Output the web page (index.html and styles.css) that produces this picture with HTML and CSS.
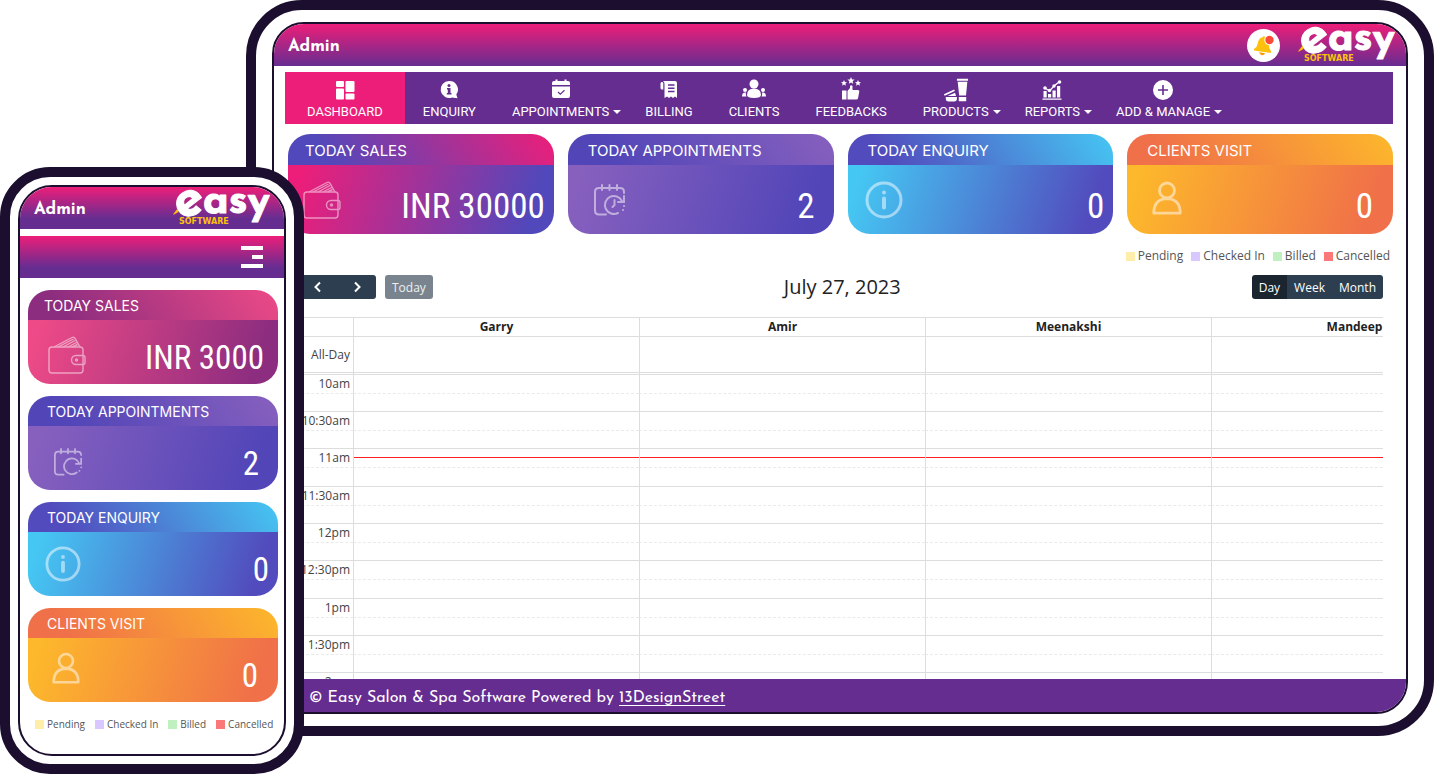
FILE: index.html
```html
<!DOCTYPE html>
<html lang="en">
<head>
<meta charset="utf-8">
<title>Easy Salon &amp; Spa Software</title>
<link rel="stylesheet" href="styles.css">
</head>
<body>
<svg class="sprite" aria-hidden="true">
  <symbol id="i-wallet" viewBox="0 0 38 38">
    <g fill="none" stroke="currentColor" stroke-width="1.400">
      <rect x="1" y="11" width="34" height="26" rx="3"/>
      <path d="M6 11L24 1.500q2-1 3 .8L32 11M10 11L25.500 3M15 11l12-6.500M20 11l8.500-4.500M24.500 11l5-2.500"/>
      <path d="M35 19.500h-7a4.500 4.500 0 0 0 0 9h7q2 0 2-2v-5q0-2-2-2z"/>
      <circle cx="28.500" cy="24" r="1"/>
    </g>
  </symbol>
  <symbol id="i-calclock" viewBox="0 0 32 32">
    <g fill="none" stroke="currentColor" stroke-width="2" stroke-linecap="round">
      <path d="M12 30.500H5q-4 0-4-4V8q0-4 4-4h21q4 0 4 4v1M8 1v5M15.500 1v5M23 1v5"/>
      <path d="M24 29a9 9 0 1 1 4-12M30 12v6h-6M20.500 16v5l-2 2"/>
      <path d="M30 22h.1M29 26h.1"/>
    </g>
  </symbol>
  <symbol id="i-calredo" viewBox="0 0 32 32">
    <g fill="none" stroke="currentColor" stroke-width="2" stroke-linecap="round">
      <path d="M11 30.500H5q-4 0-4-4V8q0-4 4-4h22q4 0 4 4M8 1v5M16 1v5M24 1v5"/>
      <path d="M26 28a9 9 0 1 1 3-10M31 12v6h-6M31 22h.1M29 26h.1"/>
    </g>
  </symbol>
  <symbol id="i-info" viewBox="0 0 38 38">
    <circle cx="19" cy="19" r="17" fill="none" stroke="currentColor" stroke-width="3"/>
    <circle cx="19" cy="11.500" r="2" fill="currentColor"/>
    <path d="M19 17.500v9" stroke="currentColor" stroke-width="4" stroke-linecap="round"/>
  </symbol>
  <symbol id="i-person" viewBox="0 0 30 34">
    <g fill="none" stroke="currentColor" stroke-width="2.800" stroke-linejoin="round">
      <circle cx="15" cy="9.500" r="7.500"/>
      <path d="M1.800 32.200h26.400q0-14-13.200-14.500Q1.800 18.200 1.800 32.200z"/>
    </g>
  </symbol>
  <symbol id="n-dash" viewBox="0 0 26 26">
    <g fill="currentColor">
      <rect x="4" y="4" width="8" height="6" rx="1"/><rect x="4" y="11.500" width="8" height="11" rx="1"/>
      <rect x="13.500" y="4" width="9" height="11" rx="1"/><rect x="13.500" y="16.500" width="9" height="6" rx="1"/>
    </g>
  </symbol>
  <symbol id="n-enq" viewBox="0 0 26 26">
    <path d="M13 4a8.500 8.500 0 1 0 3 16.500l5.500.8-1.200-3.800A8.500 8.500 0 0 0 13 4z" fill="currentColor"/>
    <g fill="#662d91"><circle cx="13" cy="8.500" r="1.500"/><path d="M11 11h3.500v5H15.500v1.500h-4.700V16h1v-3.500H11z"/></g>
  </symbol>
  <symbol id="n-appt" viewBox="0 0 26 26">
    <path d="M4 8V6q0-2 2-2h1.500V2.500h2V4h7V2.500h2V4H20q2 0 2 2v2zM4 9.500h18V19q0 2-2 2H6q-2 0-2-2z" fill="currentColor"/>
    <path d="M10 15l2.300 2.200 4.200-4" fill="none" stroke="#662d91" stroke-width="1.200"/>
  </symbol>
  <symbol id="n-bill" viewBox="0 0 26 26">
    <path d="M7 4h12q2 0 2 2v15l-2-1.500-2 1.500-2-1.500-2 1.500-2-1.500L8.500 21V7Q8.500 5 7 4zM7.300 6v6.500H6q-1.500 0-1.500-1.500V6.500Q4.500 5 5.800 5 7 5 7.300 6z" fill="currentColor"/>
    <path d="M12 8h6.500M12 11.200h6.500M12 14.400h6.500" stroke="#662d91" stroke-width="1.500"/>
  </symbol>
  <symbol id="n-clients" viewBox="0 0 26 26">
    <g fill="currentColor">
      <circle cx="13" cy="7" r="4.500"/><path d="M6 18q0-6.500 7-6.500t7 6.500q0 3-7 3t-7-3z"/>
      <circle cx="4" cy="13" r="2"/><circle cx="22" cy="13" r="2"/>
      <path d="M5 15.500q-4-.5-4 4h4.500q-1-1.500-.5-4zM21 15.500q4-.5 4 4h-4.500q1-1.500.5-4z"/>
    </g>
  </symbol>
  <symbol id="n-feed" viewBox="0 0 26 26">
    <g fill="currentColor">
      <path d="M13 0l1 2.400 2.600.2-2 1.700.6 2.500L13 5.400l-2.200 1.400.6-2.500-2-1.700 2.600-.2z"/>
      <path d="M6 3l.9 2 2.100.2-1.600 1.400.5 2.100L6 7.600 4.100 8.700l.5-2.100L3 5.200 5.100 5zM20 3l.9 2 2.100.2-1.600 1.400.5 2.100L20 7.600l-1.900 1.100.5-2.100L17 5.200l2.100-.2z"/>
      <path d="M4 13.500h4.500v9H4zM9.500 14l2.500-3V9q1-1.500 2.500 0v4H20q1.500 0 1.300 1.500l-1.200 6.500q-.3 1.500-1.800 1.500H9.500z"/>
    </g>
  </symbol>
  <symbol id="n-prod" viewBox="0 0 28 28">
    <path d="M15 2h12v2H15zM15.800 5h10.400l-1.400 15h-7.400zM17 21.500h8V26h-8zM1 18.500l11-5 .8 1.600-11 5zM3 21.500h12v2q0 3-3 3H6q-3 0-3-3z" fill="currentColor"/>
    <path d="M5 20.500l8-3.500 1 3.500z" fill="currentColor"/>
  </symbol>
  <symbol id="n-rep" viewBox="0 0 26 26">
    <path d="M3.500 21.500h19v1.200h-19zM4.500 14h3.200v6.500H4.500zM9 17h3.200v3.500H9zM13.500 13.500h3.200v7h-3.200zM18 9h3.200v11.500H18z" fill="currentColor"/>
    <path d="M6 11l4.500 3L15 9l5-4" fill="none" stroke="currentColor" stroke-width="1.300"/>
    <g fill="currentColor"><circle cx="6" cy="11" r="1.800"/><circle cx="10.500" cy="13.500" r="1.700"/><circle cx="15" cy="9" r="1.700"/><circle cx="20.500" cy="5" r="1.800"/></g>
  </symbol>
  <symbol id="n-add" viewBox="0 0 26 26">
    <circle cx="13" cy="13" r="10" fill="currentColor"/>
    <path d="M13 8v10M8 13h10" stroke="#662d91" stroke-width="1.600"/>
  </symbol>
  <symbol id="i-bell" viewBox="0 0 33 33">
    <g transform="rotate(8 16 18)">
      <path d="M16 8q-5.500.5-5.700 7-.1 4-2.800 6v1.800h17V21q-2.700-2-2.800-6Q21.500 8.500 16 8z" fill="#fdc10d"/>
      <circle cx="16" cy="9" r="1.700" fill="#fdc10d"/>
      <path d="M13 23.800h6q-.8 2.500-3 2.500t-3-2.500z" fill="#fb9c05"/>
    </g>
    <circle cx="22.500" cy="11" r="5.200" fill="#fff"/><circle cx="22.500" cy="11" r="4.200" fill="#fb4a3a"/>
  </symbol>
</svg>

<main class="stage">
  <section class="device tablet">
    <div class="screen">
      <header class="topbar">
        <span class="user">Admin</span>
        <button class="bell" aria-label="Notifications"><svg><use href="#i-bell"/></svg></button>
        <svg class="logo" viewBox="0 0 92 36" role="img" aria-label="Easy Software">
          <text x="2" y="26" class="logo-e" transform="rotate(-20 15 15)">e</text>
          <text x="30" y="23" class="logo-asy">asy</text>
          <path d="M0 24.500l4.500-6 1 3.500-4.500 2.500z" fill="#fdc10d"/>
          <text x="6" y="34" class="logo-sub">SOFTWARE</text>
        </svg>
      </header>
      <nav class="nav">
        <button class="nav-item active"><svg><use href="#n-dash"/></svg><span>DASHBOARD</span></button>
        <button class="nav-item"><svg><use href="#n-enq"/></svg><span>ENQUIRY</span></button>
        <button class="nav-item"><svg><use href="#n-appt"/></svg><span class="caret">APPOINTMENTS</span></button>
        <button class="nav-item"><svg><use href="#n-bill"/></svg><span>BILLING</span></button>
        <button class="nav-item"><svg><use href="#n-clients"/></svg><span>CLIENTS</span></button>
        <button class="nav-item"><svg><use href="#n-feed"/></svg><span>FEEDBACKS</span></button>
        <button class="nav-item"><svg><use href="#n-prod"/></svg><span class="caret">PRODUCTS</span></button>
        <button class="nav-item"><svg><use href="#n-rep"/></svg><span class="caret">REPORTS</span></button>
        <button class="nav-item"><svg><use href="#n-add"/></svg><span class="caret">ADD &amp; MANAGE</span></button>
      </nav>
      <div class="cards">
        <article class="card sales"><h2>TODAY SALES</h2><div class="card-body"><svg><use href="#i-wallet"/></svg><strong>INR 30000</strong></div></article>
        <article class="card appts"><h2>TODAY APPOINTMENTS</h2><div class="card-body"><svg><use href="#i-calclock"/></svg><strong>2</strong></div></article>
        <article class="card enquiry"><h2>TODAY ENQUIRY</h2><div class="card-body"><svg><use href="#i-info"/></svg><strong>0</strong></div></article>
        <article class="card clients"><h2>CLIENTS VISIT</h2><div class="card-body"><svg><use href="#i-person"/></svg><strong>0</strong></div></article>
      </div>
      <ul class="legend">
        <li class="pending">Pending</li><li class="checked">Checked In</li><li class="billed">Billed</li><li class="cancelled">Cancelled</li>
      </ul>
      <div class="toolbar">
        <div class="tools">
          <div class="group">
            <button class="btn arrow" aria-label="Previous"><svg viewBox="0 0 12 12"><path d="M8 1.500L3.500 6 8 10.500"/></svg></button>
            <button class="btn arrow" aria-label="Next"><svg viewBox="0 0 12 12"><path d="M4 1.500L8.500 6 4 10.500"/></svg></button>
          </div>
          <button class="btn today">Today</button>
        </div>
        <h1>July 27, 2023</h1>
        <div class="group">
          <button class="btn on">Day</button><button class="btn">Week</button><button class="btn">Month</button>
        </div>
      </div>
      <div class="calendar">
        <table>
          <thead>
            <tr><th class="axis"></th><th>Garry</th><th>Amir</th><th>Meenakshi</th><th>Mandeep</th></tr>
            <tr class="allday"><td class="axis">All-Day</td><td></td><td></td><td></td><td></td></tr>
          </thead>
          <tbody>
            <tr><td class="axis">10am</td><td></td><td></td><td></td><td></td></tr>
            <tr><td class="axis"></td><td></td><td></td><td></td><td></td></tr>
            <tr><td class="axis">10:30am</td><td></td><td></td><td></td><td></td></tr>
            <tr><td class="axis"></td><td></td><td></td><td></td><td></td></tr>
            <tr class="now"><td class="axis">11am</td><td></td><td></td><td></td><td></td></tr>
            <tr><td class="axis"></td><td></td><td></td><td></td><td></td></tr>
            <tr><td class="axis">11:30am</td><td></td><td></td><td></td><td></td></tr>
            <tr><td class="axis"></td><td></td><td></td><td></td><td></td></tr>
            <tr><td class="axis">12pm</td><td></td><td></td><td></td><td></td></tr>
            <tr><td class="axis"></td><td></td><td></td><td></td><td></td></tr>
            <tr><td class="axis">12:30pm</td><td></td><td></td><td></td><td></td></tr>
            <tr><td class="axis"></td><td></td><td></td><td></td><td></td></tr>
            <tr><td class="axis">1pm</td><td></td><td></td><td></td><td></td></tr>
            <tr><td class="axis"></td><td></td><td></td><td></td><td></td></tr>
            <tr><td class="axis">1:30pm</td><td></td><td></td><td></td><td></td></tr>
            <tr><td class="axis"></td><td></td><td></td><td></td><td></td></tr>
            <tr><td class="axis">2pm</td><td></td><td></td><td></td><td></td></tr>
          </tbody>
        </table>
      </div>
      <footer class="footer">© Easy Salon &amp; Spa Software Powered by <a href="#">13DesignStreet</a></footer>
    </div>
  </section>

  <section class="device phone">
    <div class="screen">
      <header class="topbar">
        <span class="user">Admin</span>
        <svg class="logo" viewBox="0 0 92 36" role="img" aria-label="Easy Software">
          <text x="2" y="26" class="logo-e" transform="rotate(-20 15 15)">e</text>
          <text x="30" y="23" class="logo-asy">asy</text>
          <path d="M0 24.500l4.500-6 1 3.500-4.500 2.500z" fill="#fdc10d"/>
          <text x="6" y="34" class="logo-sub">SOFTWARE</text>
        </svg>
      </header>
      <div class="menubar"><button class="burger" aria-label="Menu"><i></i><i></i><i></i></button></div>
      <div class="cards">
        <article class="card sales"><h2>TODAY SALES</h2><div class="card-body"><svg><use href="#i-wallet"/></svg><strong>INR 3000</strong></div></article>
        <article class="card appts"><h2>TODAY APPOINTMENTS</h2><div class="card-body"><svg><use href="#i-calredo"/></svg><strong>2</strong></div></article>
        <article class="card enquiry"><h2>TODAY ENQUIRY</h2><div class="card-body"><svg><use href="#i-info"/></svg><strong>0</strong></div></article>
        <article class="card clients"><h2>CLIENTS VISIT</h2><div class="card-body"><svg><use href="#i-person"/></svg><strong>0</strong></div></article>
      </div>
      <ul class="legend">
        <li class="pending">Pending</li><li class="checked">Checked In</li><li class="billed">Billed</li><li class="cancelled">Cancelled</li>
      </ul>
    </div>
  </section>
</main>
</body>
</html>
```
FILE: styles.css
```css
* { box-sizing: border-box; }
body { margin: 0; background: #fff; font-family: "Open Sans", sans-serif; }
button { border: 0; padding: 0; margin: 0; background: none; color: inherit; font: inherit; cursor: pointer; }
h1, h2, ul { margin: 0; padding: 0; font-weight: 400; }
.sprite { display: none; }

.stage { position: relative; padding: 0 0 38px 246px; }
.device { border: 10px solid #1b0e2e; background: #fff; }
.tablet { height: calc(100vh - 38px); min-height: 560px; padding: 12px 16px; border-radius: 56px; }
.phone { position: absolute; left: 0; top: 167px; width: 304px; padding: 8px; border-radius: 50px; }
.screen { display: flex; flex-direction: column; height: 100%; border: 2px solid #1b0e2e; overflow: hidden; }
.tablet .screen { border-radius: 32px; }
.phone .screen { border-radius: 34px; }

/* top bar */
.topbar { display: flex; align-items: center; flex: none; height: 42px; padding: 0 16px 0 14px; background: linear-gradient(#ed1e79, #662d91); color: #fff; }
.user { margin-right: auto; padding-top: 4px; font: 700 17px/24px "Josefin Sans", Lato, sans-serif; }
.bell { width: 33px; height: 33px; margin-right: 18px; border-radius: 50%; background: #fff; }
.bell svg { display: block; width: 33px; height: 33px; }
.logo { width: 92px; height: 36px; overflow: visible; }
.logo-e, .logo-asy { fill: #fff; stroke: #fff; stroke-width: 1; stroke-linejoin: round; font-family: "Josefin Sans", Lato, sans-serif; font-weight: 700; }
.logo-e { font-size: 54px; }
.logo-asy { font-size: 42px; }
.logo-sub { fill: #fdc10d; font: 700 8px "DejaVu Sans", sans-serif; }
.phone .topbar { padding-right: 19px; }
.phone .topbar, .menubar { background: linear-gradient(#ed1e79, #662d91 75%); }

/* navigation */
.nav { display: flex; flex: none; height: 52px; margin: 6px 13px 0 11px; background: #662d91; }
.nav-item { display: flex; flex-direction: column; align-items: center; padding: 5px 18px 0; color: #fff; font: 400 13px/17px Roboto, sans-serif; }
.nav-item.active { padding: 5px 22px 0; background: #ed1e79; }
.nav-item svg { flex: none; width: 26px; height: 26px; }
.caret { position: relative; }
.caret::after { content: ""; position: absolute; left: calc(100% + 4px); top: 7px; border: 4px solid transparent; border-top-color: #fff; }

/* summary cards */
.cards { display: grid; flex: none; }
.tablet .cards { grid-template-columns: repeat(4, 1fr); gap: 14px; margin: 10px 13px 0 14px; }
.phone .cards { gap: 12px; margin: 12px 6px 0 8px; }
.card { display: grid; grid-template-rows: 31px 69px; overflow: hidden; border-radius: 22px; color: #fff; }
.card h2 { padding-left: 20px; background: linear-gradient(55deg, var(--b) 15%, var(--a)); font: 400 15px/33px Inter, sans-serif; }
.card-body { display: flex; align-items: center; justify-content: space-between; padding: 0 19px 0 26px; background: linear-gradient(108deg, var(--a) 5%, var(--b) 90%); }
.card-body svg { width: 32px; height: 32px; opacity: .5; }
.card-body strong { padding-top: 14px; font: 400 35px/38px "Roboto Condensed", "Liberation Sans Narrow", Roboto, sans-serif; }
.sales { --a: #ed1e79; --b: #5148bb; }
.appts { --a: #8760be; --b: #5145b8; }
.enquiry { --a: #45c7f3; --b: #524bbd; }
.clients { --a: #fdb82b; --b: #f07049; }
.sales h2 { padding-left: 17px; }
.sales .card-body { padding: 0 9px 0 15px; }
.enquiry .card-body { padding: 0 9px 0 17px; }
.clients .card-body { padding: 0 20px 0 24px; }
.sales .card-body svg, .enquiry .card-body svg { width: 38px; height: 38px; }
.clients .card-body svg { height: 34px; margin-bottom: 4px; }
.phone .sales { --a: #ed4a87; --b: #8d2d7f; }
.phone .card { grid-template-rows: 30px 64px; }
.phone .card h2 { padding-left: 19px; font-size: 14px; line-height: 31px; }
.phone .sales h2 { padding-left: 16px; }
.phone .card-body svg { margin-top: 6px; }
.phone .card-body strong { padding-top: 12px; font-size: 33px; }
.phone .sales .card-body { padding: 0 14px 0 20px; }
.phone .appts .card-body svg { width: 28px; margin-top: 8px; }
.phone .enquiry .card-body svg { width: 36px; margin-top: 0; }
.phone .clients .card-body svg { width: 28px; margin-top: 0; margin-bottom: 4px; }

/* legend */
.legend { display: flex; flex: none; gap: 8px; list-style: none; color: #555; }
.tablet .legend { justify-content: flex-end; margin: 14px 16px 0; font-size: 12px; line-height: 16px; }
.phone .legend { gap: 10px; margin: 14px 10px 22px 15px; font-size: 10px; line-height: 16px; }
.legend li { display: flex; align-items: center; gap: 3px; white-space: nowrap; }
.legend li::before { content: ""; width: 9px; height: 9px; background: var(--c); }
.pending { --c: #ffeeaa; }
.checked { --c: #d8c8ff; }
.billed { --c: #c0f0c0; }
.cancelled { --c: #fb7878; }

/* calendar */
.toolbar { display: flex; flex: none; align-items: center; justify-content: space-between; margin: 11px 23px 0 24px; }
.toolbar h1 { color: #222; font-size: 20px; line-height: 24px; }
.tools { display: flex; gap: 9px; }
.group { display: flex; overflow: hidden; border-radius: 3px; }
.btn { height: 24px; padding: 0 7px; background: #2c3e50; color: #fff; font-size: 12px; line-height: 25px; }
.btn.on { background: #1a252f; }
.btn.today { border-radius: 3px; background: #7a848f; color: #eef0f2; }
.btn.arrow { width: 39px; }
.arrow svg { display: block; width: 12px; height: 12px; margin: 0 auto; fill: none; stroke: #fff; stroke-width: 2; }
.calendar { flex: 1; min-height: 0; margin: 18px 23px 0 13px; overflow: hidden; }
.calendar table { width: calc(100% + 114px); table-layout: fixed; border-collapse: separate; border-spacing: 0; border-top: 1px solid #ddd; font-size: 12px; color: #333; }
.calendar th, .calendar td { padding: 0; border-left: 1px solid #ddd; line-height: 16px; }
.calendar th { height: 18px; color: #222; font-weight: 700; }
.calendar .axis { width: 66px; padding-right: 3px; border-left: 0; text-align: right; color: #444; }
.calendar .allday td { height: 39px; border-top: 1px solid #ddd; border-bottom: 3px double #ddd; }
.calendar tbody td { height: 18px; border-bottom: 1px solid #ddd; }
.calendar tbody tr:nth-child(odd) td { height: 19px; border-bottom: 1px dashed #eaeaea; }
.calendar tbody tr:nth-child(6n) td { height: 19px; }
.calendar tbody .now td:not(.axis) { background: linear-gradient(#f22, #f22) 0 8px / 100% 1px no-repeat; }

.footer { flex: none; height: 33px; padding-left: 35px; background: #662d91; color: #fff; font: 400 16px/39px "Josefin Sans", Lato, sans-serif; }
.footer a { color: inherit; text-underline-offset: 3px; }

/* phone menu */
.menubar { display: flex; flex: none; align-items: center; justify-content: flex-end; height: 42px; margin-top: 7px; padding-right: 21px; }
.burger { display: grid; gap: 5px; justify-items: end; width: 22px; }
.burger i { width: 22px; height: 4px; background: #fff; }
.burger i:nth-child(2) { width: 11px; }
```
